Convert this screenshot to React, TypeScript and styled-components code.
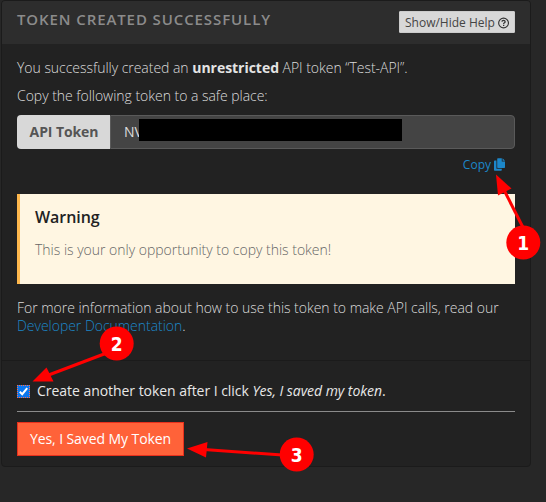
import React from "react";
import styled, { createGlobalStyle } from "styled-components";

const Global = createGlobalStyle`
  * { box-sizing: border-box; }
  html, body { margin: 0; height: 100%; background: #272727; overflow: hidden; }
  body { font-family: "Open Sans", sans-serif; font-size: 14px; font-weight: 300; color: #dcdcdc; }
  p, h1, h2 { margin: 0; }
`;

const Page = styled.main`
  position: relative;
  width: 546px;
  height: 502px;
  padding-left: 1px;
`;

const Panel = styled.section`
  width: 530px;
  height: 467px;
  border: 1px solid #1b1b1b;
  border-radius: 4px;
  background: #222;
  overflow: hidden;
`;

const PanelHeader = styled.header`
  display: flex;
  justify-content: space-between;
  align-items: flex-start;
  height: 43px;
  padding: 10px 15px 0;
  background: #2d2d2d;
`;

const Title = styled.h1`
  font-size: 15px;
  line-height: 16px;
  font-weight: 600;
  letter-spacing: 0.9px;
  color: #8b8b8b;
  text-transform: uppercase;
  white-space: nowrap;
`;

const HelpButton = styled.button`
  display: flex;
  align-items: center;
  gap: 3px;
  width: 116px;
  height: 22px;
  padding: 1px 5px 0;
  border: 1px solid #ccc;
  border-radius: 1px;
  background: #d8d8d8;
  color: #444;
  font: 400 12px/20px "Open Sans", sans-serif;
  white-space: nowrap;
`;

const PanelBody = styled.div`
  height: 317px;
  padding: 15px 15px 0;
  border-bottom: 1px solid #1b1b1b;
`;

const Text = styled.p<{ $gap?: number; $spacing?: number }>`
  line-height: 18px;
  margin-top: ${(p) => p.$gap ?? 0}px;
  letter-spacing: ${(p) => p.$spacing ?? -0.03}px;
  white-space: nowrap;
  strong { font-weight: 700; color: #e4e4e4; }
`;

const TokenGroup = styled.div`
  display: flex;
  height: 34px;
  margin-top: 10px;
`;

const TokenLabel = styled.label`
  width: 93px;
  padding-left: 1px;
  border-radius: 4px 0 0 4px;
  background: #d8d8d8;
  color: #555;
  font-weight: 700;
  letter-spacing: -0.1px;
  line-height: 34px;
  text-align: center;
`;

const TokenField = styled.div`
  display: flex;
  flex: 1;
  padding: 3px 0 0 13px;
  border: 1px solid #5a5a5a;
  border-radius: 0 4px 4px 0;
  background: #444;
  line-height: 26px;
  font-weight: 400;
`;

const TokenValue = styled.span`
  width: 15px;
`;

const Redaction = styled.span`
  position: relative;
  width: 263px;
  height: 22px;
  background: #000;
`;

const CopyLink = styled.a`
  display: flex;
  justify-content: flex-end;
  align-items: center;
  gap: 3px;
  height: 18px;
  margin-top: 6px;
  padding-right: 10px;
  color: #1c87c9;
  font-size: 12px;
  font-weight: 400;
`;

const Alert = styled.div`
  height: 90px;
  margin-top: 21px;
  padding: 13px 15px;
  border-left: 3px solid #ffb84d;
  background: #fff6e2;
  color: #666;
`;

const AlertTitle = styled.h2`
  font-size: 16px;
  line-height: 20px;
  font-weight: 600;
  letter-spacing: -0.05px;
  color: #222;
`;

const DocLink = styled.a`
  color: #1c87c9;
`;

const PanelFooter = styled.footer`
  padding: 19px 15px 0;
`;

const CheckRow = styled.label`
  display: flex;
  align-items: center;
  gap: 7px;
  height: 20px;
  color: #e8e8e8;
  font-weight: 400;
  letter-spacing: -0.04px;
  white-space: nowrap;
`;

const CheckMark = styled.svg`
  flex: none;
  margin-top: 3px;
`;

const Rule = styled.hr`
  height: 1px;
  margin: 11px 0 10px;
  border: 0;
  background: #8b8b8b;
`;

const SaveButton = styled.button`
  display: block;
  width: 167px;
  height: 34px;
  padding: 0;
  border: 1px solid #e8301c;
  background: #ff6239;
  color: #fff;
  font: 400 14px/32px "Open Sans", sans-serif;
  letter-spacing: -0.08px;
  white-space: nowrap;
`;

const Callouts = styled.svg`
  position: absolute;
  inset: 0;
  pointer-events: none;
  fill: #f00;
  text {
    fill: #fff;
    font: 700 19px "DejaVu Sans Condensed", "DejaVu Sans", sans-serif;
    font-stretch: condensed;
    text-anchor: middle;
  }
  line { stroke: #f00; stroke-width: 3; }
`;

const callouts = [
  { n: 1, x: 523.3, y: 242.5, head: "496,174.5 511.5,188.5 498,195.5", from: [503, 188], to: [523.3, 228] },
  { n: 2, x: 116.7, y: 343.5, head: "32.5,381.5 46.5,367.5 53.5,381.5", from: [46, 376], to: [112, 351] },
  { n: 3, x: 296.7, y: 454.5, head: "187,448.5 207.5,442 206,457.5", from: [204, 449.5], to: [296.7, 456] },
];

export default function App() {
  return (
    <Page>
      <Global />
      <Panel>
        <PanelHeader>
          <Title>Token created successfully</Title>
          <HelpButton>
            Show/Hide Help
            <svg width="12" height="12" viewBox="0 0 12 12" fill="none" stroke="#333">
              <circle cx="6" cy="6" r="5.3" strokeWidth="1.2" />
              <path d="M4.2 4.6Q4.4 3.2 6 3.2T7.7 4.6Q7.7 5.3 6.9 5.7Q6.1 6.1 6.1 7" strokeWidth="1.4" />
              <path d="M6.1 8V9.3" strokeWidth="1.4" />
            </svg>
          </HelpButton>
        </PanelHeader>
        <PanelBody>
          <Text>
            You successfully created an <strong>unrestricted</strong> API token “Test-API”.
          </Text>
          <Text $gap={10}>Copy the following token to a safe place:</Text>
          <TokenGroup>
            <TokenLabel>API Token</TokenLabel>
            <TokenField>
              <TokenValue>NV</TokenValue>
              <Redaction />
            </TokenField>
          </TokenGroup>
          <CopyLink>
            Copy
            <svg width="11" height="13" viewBox="0 0 11.3 13" fill="currentColor">
              <path d="M4 0H8V3.5H11.3V9.3Q11.3 10 10.6 10H4Q3.3 10 3.3 9.3V.7Q3.3 0 4 0ZM8.8 0L11.3 2.7H8.8Z" />
              <path d="M.8 2.5H2.5V10.8H8V12.2Q8 13 7.2 13H.8Q0 13 0 12.2V3.3Q0 2.5.8 2.5Z" />
            </svg>
          </CopyLink>
          <Alert>
            <AlertTitle>Warning</AlertTitle>
            <Text $gap={14} $spacing={-0.01}>This is your only opportunity to copy this token!</Text>
          </Alert>
          <Text $gap={15}>
            For more information about how to use this token to make API calls, read our
            <br />
            <DocLink>Developer Documentation</DocLink>.
          </Text>
        </PanelBody>
        <PanelFooter>
          <CheckRow>
            <CheckMark width="13" height="13" viewBox="0 0 13 13" fill="none">
              <rect width="13" height="13" fill="#0b77ee" />
              <path
                d="M0 .5H13M12.5 0V13M13 12.5H0M.5 13V0"
                stroke="#ff704d"
                strokeDasharray="1 1"
                shapeRendering="crispEdges"
              />
              <path d="M2.8 6.8L5.2 9.2L10.2 3.2" stroke="#fff" strokeWidth="2" />
            </CheckMark>
            <span>
              Create another token after I click <em>Yes, I saved my token</em>.
            </span>
          </CheckRow>
          <Rule />
          <SaveButton>Yes, I Saved My Token</SaveButton>
        </PanelFooter>
      </Panel>
      <Callouts width="546" height="502">
        {callouts.map((c) => (
          <g key={c.n}>
            <line x1={c.from[0]} y1={c.from[1]} x2={c.to[0]} y2={c.to[1]} />
            <polygon points={c.head} />
            <circle cx={c.x} cy={c.y} r="17" />
            <text x={c.x} y={c.y + 7}>{c.n}</text>
          </g>
        ))}
      </Callouts>
    </Page>
  );
}
